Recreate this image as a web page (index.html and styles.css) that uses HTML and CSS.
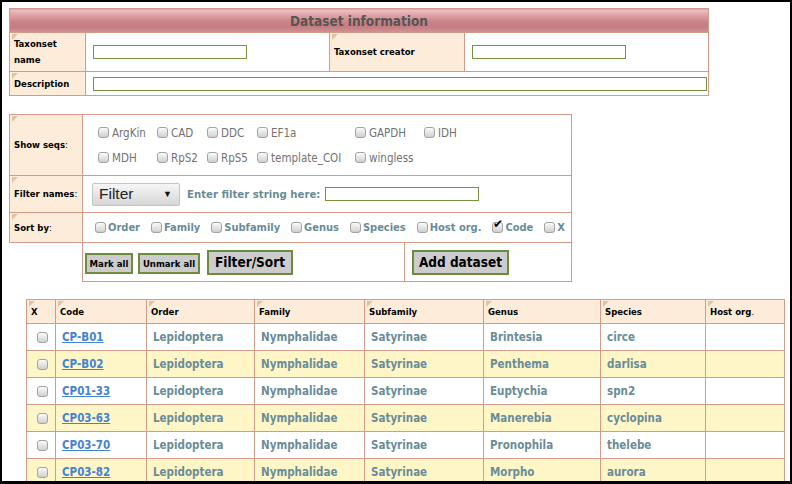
FILE: index.html
```html
<!DOCTYPE html>
<html>
<head>
<meta charset="utf-8">
<title>Dataset information</title>
<link rel="stylesheet" href="styles.css">
</head>
<body>
<div class="frame">
  <table class="info">
    <colgroup><col class="c76"><col class="c244"><col class="c135"><col class="c244"></colgroup>
    <tr><th colspan="4" class="title">Dataset information</th></tr>
    <tr class="r1">
      <td class="lbl">Taxonset<br>name</td>
      <td class="fld"><input type="text" class="txt w154"></td>
      <td class="lbl">Taxonset creator</td>
      <td class="fld"><input type="text" class="txt w154"></td>
    </tr>
    <tr class="r2">
      <td class="lbl">Description</td>
      <td class="fld" colspan="3"><input type="text" class="txt wide"></td>
    </tr>
  </table>

  <table class="filters">
    <colgroup><col class="c73"><col class="c322"><col class="c167"></colgroup>
    <tr class="r-seqs">
      <td class="lbl">Show seqs<span class="n">:</span></td>
      <td colspan="2">
        <div class="seqgrid">
          <label class="seq"><input type="checkbox" class="cb">ArgKin</label>
          <label class="seq"><input type="checkbox" class="cb">CAD</label>
          <label class="seq"><input type="checkbox" class="cb">DDC</label>
          <label class="seq"><input type="checkbox" class="cb">EF1a</label>
          <label class="seq"><input type="checkbox" class="cb">GAPDH</label>
          <label class="seq"><input type="checkbox" class="cb">IDH</label>
          <label class="seq"><input type="checkbox" class="cb">MDH</label>
          <label class="seq"><input type="checkbox" class="cb">RpS2</label>
          <label class="seq"><input type="checkbox" class="cb">RpS5</label>
          <label class="seq"><input type="checkbox" class="cb">template_COI</label>
          <label class="seq"><input type="checkbox" class="cb">wingless</label>
        </div>
      </td>
    </tr>
    <tr class="r-filter">
      <td class="lbl">Filter names<span class="n">:</span></td>
      <td colspan="2">
        <div class="frow">
          <div class="select"><span>Filter</span><span class="arrow">▼</span></div>
          <span class="teal flabel">Enter filter string here:</span>
          <input type="text" class="txt w154">
        </div>
      </td>
    </tr>
    <tr class="r-sort">
      <td class="lbl">Sort by<span class="n">:</span></td>
      <td colspan="2">
        <div class="sortrow">
          <label class="sitem"><input type="checkbox" class="cb">Order</label>
          <label class="sitem"><input type="checkbox" class="cb">Family</label>
          <label class="sitem"><input type="checkbox" class="cb">Subfamily</label>
          <label class="sitem"><input type="checkbox" class="cb">Genus</label>
          <label class="sitem"><input type="checkbox" class="cb">Species</label>
          <label class="sitem"><input type="checkbox" class="cb">Host org.</label>
          <label class="sitem"><input type="checkbox" class="cb" checked>Code</label>
          <label class="sitem"><input type="checkbox" class="cb">X</label>
        </div>
      </td>
    </tr>
    <tr class="r-btns">
      <td class="blank"></td>
      <td>
        <div class="btnrow">
          <button class="btn small mark">Mark all</button>
          <button class="btn small unmark">Unmark all</button>
          <button class="btn big fsort">Filter/Sort</button>
        </div>
      </td>
      <td class="addcell"><button class="btn big add">Add dataset</button></td>
    </tr>
  </table>

  <table class="data">
    <colgroup>
      <col class="d29"><col class="d91"><col class="d108"><col class="d110">
      <col class="d119"><col class="d117"><col class="d105"><col class="d79">
    </colgroup>
    <thead>
      <tr>
        <th>X</th><th>Code</th><th>Order</th><th>Family</th><th>Subfamily</th><th>Genus</th><th>Species</th><th>Host org<span class="n">.</span></th>
      </tr>
    </thead>
    <tbody>
      <tr><td class="x"><input type="checkbox" class="cb"></td><td><a href="#">CP-B01</a></td><td>Lepidoptera</td><td>Nymphalidae</td><td>Satyrinae</td><td>Brintesia</td><td>circe</td><td></td></tr>
      <tr><td class="x"><input type="checkbox" class="cb"></td><td><a href="#">CP-B02</a></td><td>Lepidoptera</td><td>Nymphalidae</td><td>Satyrinae</td><td>Penthema</td><td>darlisa</td><td></td></tr>
      <tr><td class="x"><input type="checkbox" class="cb"></td><td><a href="#">CP01-33</a></td><td>Lepidoptera</td><td>Nymphalidae</td><td>Satyrinae</td><td>Euptychia</td><td>spn2</td><td></td></tr>
      <tr><td class="x"><input type="checkbox" class="cb"></td><td><a href="#">CP03-63</a></td><td>Lepidoptera</td><td>Nymphalidae</td><td>Satyrinae</td><td>Manerebia</td><td>cyclopina</td><td></td></tr>
      <tr><td class="x"><input type="checkbox" class="cb"></td><td><a href="#">CP03-70</a></td><td>Lepidoptera</td><td>Nymphalidae</td><td>Satyrinae</td><td>Pronophila</td><td>thelebe</td><td></td></tr>
      <tr><td class="x"><input type="checkbox" class="cb"></td><td><a href="#">CP03-82</a></td><td>Lepidoptera</td><td>Nymphalidae</td><td>Satyrinae</td><td>Morpho</td><td>aurora</td><td></td></tr>
    </tbody>
  </table>
</div>
</body>
</html>
```

FILE: styles.css
```css
html, body {
  margin: 0;
  padding: 0;
  background: #000;
}
body {
  font-family: "DejaVu Sans Condensed", "DejaVu Sans", sans-serif;
  font-stretch: condensed;
  color: #000;
}
.frame {
  width: 792px;
  height: 484px;
  box-sizing: border-box;
  border: 2px solid #000;
  border-bottom-width: 3px;
  background: #fff;
  overflow: hidden;
  padding: 6px 0 0 7px;
}
table {
  border-collapse: collapse;
}
td, th {
  border: 1px solid #d49c88;
  padding: 0;
}

/* column widths */
.c76 { width: 76px; }
.c244 { width: 244px; }
.c135 { width: 135px; }
.c73 { width: 73px; }
.c322 { width: 322px; }
.c167 { width: 167px; }
.d29 { width: 29px; }
.d91 { width: 91px; }
.d108 { width: 108px; }
.d110 { width: 110px; }
.d119 { width: 119px; }
.d117 { width: 117px; }
.d105 { width: 105px; }
.d79 { width: 79px; }

/* dataset info */
.info {
  width: 700px;
  table-layout: fixed;
}
.title {
  height: 23px;
  background: linear-gradient(#eec3c6 0%, #dfa2a6 25%, #c98286 55%, #c47d81 75%, #d29296 100%);
  color: #555;
  font-size: 13.5px;
  font-weight: bold;
  text-align: center;
  vertical-align: middle;
}
.lbl {
  position: relative;
  background: #fdecd9;
  font-weight: bold;
  font-size: 9.5px;
  line-height: 16px;
  padding: 0 0 0 4px;
  vertical-align: middle;
  text-align: left;
}
.lbl::before, .data th::before {
  content: "";
  position: absolute;
  left: 2px;
  top: 1px;
  width: 0;
  height: 0;
  border-style: solid;
  border-width: 6px 6px 0 0;
  border-color: #ddc4a3 transparent transparent transparent;
}
.n { font-weight: normal; }
.r1 td { height: 38px; }
.r2 td { height: 23px; }
.fld {
  padding-left: 7px;
  vertical-align: middle;
}
.txt {
  box-sizing: border-box;
  height: 14px;
  margin: 0;
  padding: 0;
  border: 1px solid #76923c;
  background: #fff;
  display: block;
}
.w154 { width: 154px; }
.wide { width: 614px; }

/* filters */
.filters {
  width: 563px;
  table-layout: fixed;
  margin-top: 18px;
}
.r-seqs td { height: 60px; }
.r-filter td { height: 36px; }
.r-sort td { height: 29px; }
.r-btns td { height: 38px; }
.blank {
  border-left: hidden;
  border-bottom: hidden;
}
.seqgrid {
  display: grid;
  grid-template-columns: 59px 50px 50px 98px 69px auto;
  row-gap: 13px;
  padding-left: 15px;
}
.seq {
  display: flex;
  align-items: center;
  gap: 3px;
  font-size: 11.5px;
  line-height: 12px;
  color: #727272;
}
.cb {
  appearance: none;
  -webkit-appearance: none;
  position: relative;
  box-sizing: border-box;
  width: 11px;
  height: 11px;
  margin: 0;
  border: 1px solid #a3a3a3;
  border-radius: 3px;
  background: linear-gradient(#fbfbfb, #cfcfcf);
  flex: none;
}
.cb:checked::after {
  content: "✔";
  position: absolute;
  left: 0;
  top: -5px;
  font-size: 12px;
  line-height: 12px;
  color: #000;
}
.teal {
  color: #698c97;
  font-weight: bold;
  font-size: 11.3px;
}
.frow {
  display: flex;
  align-items: center;
  padding-left: 9px;
}
.select {
  box-sizing: border-box;
  width: 88px;
  height: 23px;
  display: flex;
  align-items: center;
  justify-content: space-between;
  padding: 0 7px 0 6px;
  border: 1px solid #c4c4c4;
  border-radius: 2px;
  background: linear-gradient(#f6f6f6, #d6d6d6);
  font-family: "Liberation Sans", Arial, sans-serif;
  font-stretch: normal;
  font-size: 15.5px;
  color: #222;
}
.arrow {
  font-size: 9px;
  color: #111;
}
.flabel {
  margin: 0 5px 0 7px;
}
.sortrow {
  display: flex;
  align-items: center;
  gap: 11px;
  padding-left: 12px;
  white-space: nowrap;
}
.sitem {
  flex: none;
  display: flex;
  align-items: center;
  gap: 2px;
  color: #698c97;
  font-weight: bold;
  font-size: 11px;
}
.btnrow {
  display: flex;
  align-items: center;
  padding-left: 2px;
}
.btn {
  box-sizing: border-box;
  margin: 0;
  padding: 0;
  background: #cccccc;
  border: 2px solid #6e8b3d;
  border-radius: 0;
  color: #000;
  font-family: "DejaVu Sans Condensed", "DejaVu Sans", sans-serif;
  font-stretch: condensed;
  font-weight: bold;
}
.small {
  height: 21px;
  font-size: 9.5px;
}
.big {
  height: 25px;
  font-size: 13.5px;
}
.mark { width: 48px; margin-top: 2px; }
.unmark { width: 62px; margin: 2px 0 0 5px; }
.fsort { width: 86px; margin-left: 7px; }
.add { width: 97px; display: block; }
.addcell { padding-left: 7px; }

/* data table */
.data {
  width: 759px;
  table-layout: fixed;
  margin: 17px 0 0 17px;
}
.data th {
  position: relative;
  height: 23px;
  background: #fdecd9;
  font-size: 9.5px;
  font-weight: bold;
  text-align: left;
  padding-left: 4px;
  vertical-align: middle;
}
.data td {
  height: 26px;
  padding-left: 6px;
  color: #698c97;
  font-weight: bold;
  font-size: 11.5px;
  vertical-align: middle;
  background: #fff;
}
.data tbody tr:nth-child(even) td {
  background: #fef6c7;
}
.data td.x {
  padding-left: 0;
  text-align: center;
}
.data td.x .cb {
  display: inline-block;
  vertical-align: middle;
  margin-left: 2px;
}
.data a {
  color: #4482d3;
  text-decoration: underline;
}
```
